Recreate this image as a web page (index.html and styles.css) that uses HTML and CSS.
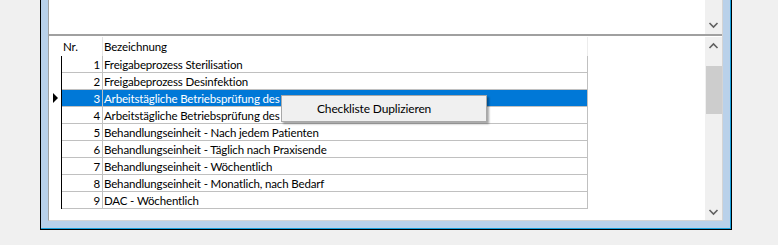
FILE: index.html
```html
<!DOCTYPE html>
<html lang="de">
<head>
  <meta charset="UTF-8">
  <title>Checklisten</title>
  <link rel="stylesheet" href="styles.css">
</head>
<body>
  <div class="window">
    <div class="client">
      <div class="top-pane">
        <div class="pane-body"></div>
        <div class="vscroll">
          <div class="track"></div>
          <svg class="chev" width="17" height="17" viewBox="0 0 17 17"><path d="M4.5 6 L8.5 10 L12.5 6" fill="none" stroke="#606060" stroke-width="1.6"/></svg>
        </div>
      </div>

      <div class="list-pane">
        <div class="grid">
          <div class="grid-head">
            <span class="ind"></span>
            <span class="c-nr">Nr.</span>
            <span class="c-name">Bezeichnung</span>
          </div>
          <div class="grid-row">
            <span class="ind"></span>
            <span class="c-nr">1</span>
            <span class="c-name">Freigabeprozess Sterilisation</span>
          </div>
          <div class="grid-row">
            <span class="ind"></span>
            <span class="c-nr">2</span>
            <span class="c-name">Freigabeprozess Desinfektion</span>
          </div>
          <div class="grid-row selected">
            <span class="ind"><i class="cursor"></i></span>
            <span class="c-nr">3</span>
            <span class="c-name">Arbeitstägliche Betriebsprüfung des P</span>
          </div>
          <div class="grid-row">
            <span class="ind"></span>
            <span class="c-nr">4</span>
            <span class="c-name">Arbeitstägliche Betriebsprüfung des A</span>
          </div>
          <div class="grid-row">
            <span class="ind"></span>
            <span class="c-nr">5</span>
            <span class="c-name">Behandlungseinheit - Nach jedem Patienten</span>
          </div>
          <div class="grid-row">
            <span class="ind"></span>
            <span class="c-nr">6</span>
            <span class="c-name">Behandlungseinheit - Täglich nach Praxisende</span>
          </div>
          <div class="grid-row">
            <span class="ind"></span>
            <span class="c-nr">7</span>
            <span class="c-name">Behandlungseinheit - Wöchentlich</span>
          </div>
          <div class="grid-row">
            <span class="ind"></span>
            <span class="c-nr">8</span>
            <span class="c-name">Behandlungseinheit - Monatlich, nach Bedarf</span>
          </div>
          <div class="grid-row">
            <span class="ind"></span>
            <span class="c-nr">9</span>
            <span class="c-name">DAC - Wöchentlich</span>
          </div>
        </div>

        <div class="vscroll">
          <svg class="chev" width="17" height="17" viewBox="0 0 17 17"><path d="M4.5 11 L8.5 7 L12.5 11" fill="none" stroke="#606060" stroke-width="1.6"/></svg>
          <div class="track">
            <div class="thumb"></div>
          </div>
          <svg class="chev" width="17" height="17" viewBox="0 0 17 17"><path d="M4.5 7 L8.5 11 L12.5 7" fill="none" stroke="#606060" stroke-width="1.6"/></svg>
        </div>
      </div>
    </div>
  </div>

  <div class="context-menu">
    <div class="menu-item">Checkliste Duplizieren</div>
  </div>
</body>
</html>
```

FILE: styles.css
```css
:root {
  --page-bg: #f0f0f0;
  --frame-blue: #b9d1ea;
  --frame-edge: #19a1dd;
  --grid-line: #c0c0c0;
  --select-blue: #0078d7;
  --scroll-bg: #f0f0f0;
  --thumb: #cdcdcd;
}

body {
  margin: 0;
  background: var(--page-bg);
  font-family: Lato, "Open Sans", sans-serif;
  font-size: 11.5px;
  letter-spacing: -0.15px;
  color: #000;
  overflow: hidden;
}

.window {
  margin-left: 40px;
  width: 692px;
  height: 230px;
  border-left: 1px solid #000;
  border-right: 1px solid #000;
  border-bottom: 1px solid #000;
  background: var(--frame-blue);
  box-shadow: inset -1px -1px 0 var(--frame-edge);
  padding: 0 8px 8px 7px;
  box-sizing: border-box;
}

.client {
  height: 100%;
  background: #fff;
  border-left: 1px solid #a0a0a0;
  border-right: 1px solid #d4d4d4;
  border-bottom: 1px solid #d4d4d4;
  box-sizing: border-box;
  display: flex;
  flex-direction: column;
}

.top-pane {
  height: 34px;
  display: flex;
  border-bottom: 2px solid #a0a0a0;
}

.pane-body {
  flex: 1;
}

.vscroll {
  width: 17px;
  background: var(--scroll-bg);
  display: flex;
  flex-direction: column;
}

.vscroll .track {
  flex: 1;
  position: relative;
}

.chev {
  display: block;
  flex: none;
}

.thumb {
  position: absolute;
  left: 1px;
  right: 0;
  top: 12px;
  height: 48px;
  background: var(--thumb);
}

.list-pane {
  flex: 1;
  display: flex;
  margin-top: 1px;
}

.grid {
  flex: 1;
}

.grid-head,
.grid-row {
  display: flex;
}

.grid-head {
  height: 19px;
  line-height: 19px;
}

.grid-row {
  height: 17px;
  line-height: 17px;
}

.ind {
  width: 12px;
  flex: none;
  position: relative;
}

.grid-head .ind {
  width: 13px;
}

.grid-row .ind {
  border-right: 1px solid #000;
}

.c-nr {
  width: 38px;
  padding-right: 2px;
  flex: none;
  border-right: 1px solid var(--grid-line);
  text-align: right;
}

.c-name {
  width: 483px;
  flex: none;
  padding-left: 1px;
  border-right: 1px solid var(--grid-line);
  white-space: nowrap;
  overflow: hidden;
}

.grid-head .c-nr {
  text-align: left;
  padding: 0 0 0 1px;
  width: 39px;
  border-right-color: #e3e3e3;
}

.grid-head .c-name {
  border-right-color: #ececec;
}

.grid-row .c-nr,
.grid-row .c-name {
  height: 16px;
  border-bottom: 1px solid var(--grid-line);
}

.grid-row.selected .c-nr,
.grid-row.selected .c-name {
  background: var(--select-blue);
  color: #fff;
}

.cursor {
  position: absolute;
  left: 4px;
  top: 3px;
  width: 0;
  height: 0;
  border-left: 5px solid #000;
  border-top: 5px solid transparent;
  border-bottom: 5px solid transparent;
}

.context-menu {
  position: absolute;
  left: 281px;
  top: 95px;
  width: 204px;
  height: 25px;
  background: #f0f0f0;
  border: 1px solid #a8a8a8;
  box-shadow: 2px 2px 2px rgba(0, 0, 0, 0.35);
}

.menu-item {
  padding-left: 35px;
  line-height: 25px;
  font-size: 12px;
}
```
